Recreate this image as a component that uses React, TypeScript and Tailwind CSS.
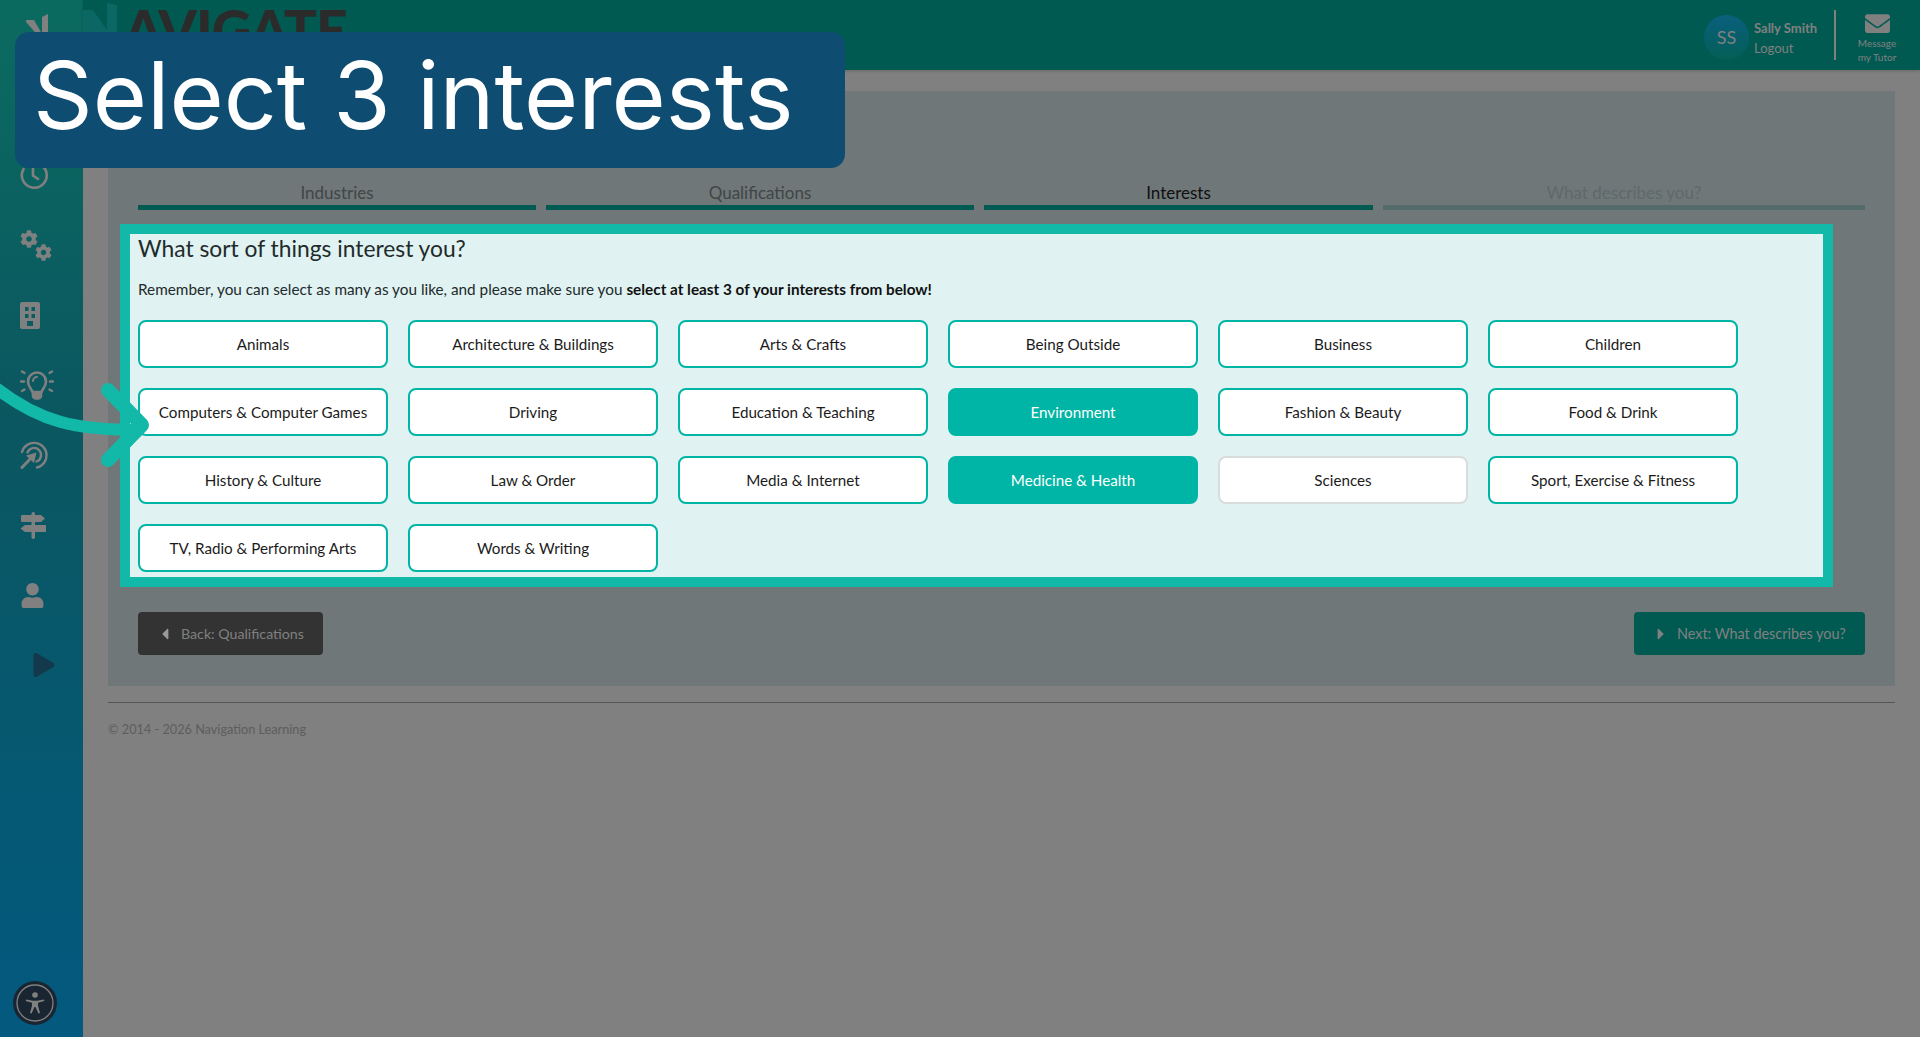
import React from "react";
import { FaCog, FaUser, FaEnvelope, FaPlay, FaCaretLeft, FaCaretRight } from "react-icons/fa";

const rows = [
  ["Animals", "Architecture & Buildings", "Arts & Crafts", "Being Outside", "Business", "Children"],
  ["Computers & Computer Games", "Driving", "Education & Teaching", "Environment", "Fashion & Beauty", "Food & Drink"],
  ["History & Culture", "Law & Order", "Media & Internet", "Medicine & Health", "Sciences", "Sport, Exercise & Fitness"],
  ["TV, Radio & Performing Arts", "Words & Writing"],
];

function Interest({ label }: { label: string }) {
  const selected = label === "Environment" || label === "Medicine & Health";
  const focused = label === "Sciences";
  return (
    <button
      className={
        "h-12 w-[250px] rounded-lg border-2 text-[15.2px] " +
        (selected
          ? "border-[#00b5a5] bg-[#00b5a5] text-white"
          : focused
          ? "border-[#d9dcdc] bg-white text-[#1b1b1b]"
          : "border-[#00b5a5] bg-white text-[#1b1b1b]")
      }
    >
      {label}
    </button>
  );
}

function Clock() {
  return (
    <svg width="28" height="28" viewBox="0 0 28 28" fill="none" stroke="#808080" strokeWidth="2.6" strokeLinecap="round">
      <path d="M8 3.6A12.4 12.4 0 1 1 3.6 8" />
      <path d="M13 7v7.5l5 3.5" />
    </svg>
  );
}
function Gears() {
  return (
    <div className="flex h-[31px] w-[32px] flex-col">
      <FaCog size={18} color="#808080" className="self-start" />
      <FaCog size={17} color="#808080" className="mt-[-4px] self-end" />
    </div>
  );
}
function Building() {
  return (
    <svg width="20" height="27" viewBox="0 0 20 27">
      <path fillRule="evenodd" fill="#808080" d="M2 0h16a2 2 0 0 1 2 2v23a2 2 0 0 1-2 2H2a2 2 0 0 1-2-2V2a2 2 0 0 1 2-2zM5 5v4h3.5V5zM11.500 5v4H15V5zM5 12v4h3.500v-4zM11.500 12v4H15v-4zM7 19v5h6v-5z" />
    </svg>
  );
}
function Bulb() {
  return (
    <svg width="34" height="34" viewBox="0 0 34 34" fill="none" stroke="#808080" strokeLinecap="round">
      <path strokeWidth="2.6" d="M12.500 24c-.5-3-4.500-5-4.500-10.500a9 9 0 0 1 18 0C26 19 22 21 21.500 24z" />
      <path fill="#808080" strokeWidth="2.6" d="M13 26h8v1.500a3 3 0 0 1-3 3h-2a3 3 0 0 1-3-3z" />
      <path strokeWidth="2" d="M13 13a4 4 0 0 1 4-4" />
      <path strokeWidth="2.400" d="M2 3.500l2.500 1.500M1 13.500h3M2 23l2.500-1.500M32 3.500L29.500 5M33 13.500h-3M32 23l-2.500-1.500" />
    </svg>
  );
}
function TargetArrow() {
  return (
    <svg width="28" height="28" viewBox="0 0 28 28" fill="none" stroke="#808080" strokeLinecap="round">
      <path strokeWidth="2.400" d="M2 11A12.500 12.500 0 1 1 17 26.500" />
      <path strokeWidth="2.400" d="M7.500 11.500A7 7 0 1 1 16.500 20.500" />
      <path strokeWidth="3" d="M2 26.500L12 16" />
      <path fill="#808080" stroke="none" d="M6 14.500L16.500 11.500L14 22z" />
    </svg>
  );
}
function Signs() {
  return (
    <svg width="26" height="27" viewBox="0 0 26 27" fill="#808080">
      <rect x="11.500" y="0" width="3.500" height="27" rx="1.700" />
      <path d="M2 3h19l4 3.500-4 3.500H2a1 1 0 0 1-1-1V4a1 1 0 0 1 1-1z" />
      <path d="M25 13H5l-4.500 3.500L5 20h20a1 1 0 0 0 1-1v-5a1 1 0 0 0-1-1z" />
    </svg>
  );
}
function Access() {
  return (
    <svg width="44" height="44" viewBox="0 0 44 44">
      <circle cx="22" cy="22" r="22" fill="#1a2532" />
      <circle cx="22" cy="22" r="18" fill="none" stroke="#808080" strokeWidth="1.300" />
      <circle cx="22" cy="14" r="2.800" fill="#808080" />
      <path fill="#808080" d="M13 18.500l7 1.200h4l7-1.200.3 1.500-6.300 1.700v3l2 7.300-1.600.5L22.500 26h-1l-2.900 6.500-1.600-.5 2-7.300v-3L12.700 20z" />
    </svg>
  );
}

const sideIcons = [
  <Clock />,
  <Gears />,
  <Building />,
  <Bulb />,
  <TargetArrow />,
  <Signs />,
  <FaUser size={25} color="#808080" />,
  <FaPlay size={24} color="#14394c" className="ml-[12px]" />,
];

export default function App() {
  return (
    <div className="relative flex h-[1037px] w-full overflow-hidden bg-[#808080] text-[15px] font-['Lato','Open_Sans',sans-serif]">
      <aside className="flex w-[83px] shrink-0 flex-col bg-gradient-to-b from-[#0b6b60] via-[#0b5760] via-40% to-[#03597f]">
        <div className="h-[140px] pl-[26px] pt-[14px]">
          <svg width="24" height="24" viewBox="0 0 24 24">
            <path fill="#808080" d="M0 6h8l8 14V3l6-3v24H14L0 8z" />
          </svg>
        </div>
        {sideIcons.map((icon, i) => (
          <div key={i} className="flex h-[70px] items-center pl-[20px]">
            {icon}
          </div>
        ))}
        <div className="mt-auto pb-[12px] pl-[13px]">
          <Access />
        </div>
      </aside>

      <main className="flex min-w-0 flex-1 flex-col">
        <header className="flex h-[70px] shrink-0 items-center justify-between overflow-hidden bg-[#005a52] shadow-[0_1px_3px_rgba(0,0,0,0.2)]">
          <div className="flex h-full items-start">
            <svg width="40" height="70" viewBox="0 0 40 70">
              <path fill="#0b6763" d="M0 10h10l14 20V3l10 2v60H0z" />
            </svg>
            <span className="ml-[1px] mt-[2px] text-[55px] font-black leading-none tracking-[-1px] text-[#2b2b2b]">AVIGATE</span>
          </div>
          <div className="flex h-full items-center text-[#808080]">
            <div className="mt-[5px] h-[45px] w-[45px] rounded-full bg-gradient-to-b from-[#0b5f7d] to-[#055e55] text-center text-[18px] leading-[45px]">SS</div>
            <div className="ml-[5px] w-[80px] pt-[5px] text-[13px] leading-[20px]">
              <div className="font-bold">Sally Smith</div>
              <div>Logout</div>
            </div>
            <div className="h-[50px] w-[2px] bg-[#808080]" />
            <div className="mr-[2px] flex w-[82px] flex-col items-center pt-[4px] text-[10px] leading-[14px]">
              <FaEnvelope size={25} color="#808080" />
              <div>Message</div>
              <div>my Tutor</div>
            </div>
          </div>
        </header>

        <section className="mx-[25px] mt-[21px] h-[595px] shrink-0 bg-[#6f7778] px-[30px] pt-[90px]">
          <div className="flex gap-[10px] text-center text-[17px] leading-[24px]">
            <div className="w-[398px] border-b-[5px] border-[#005a52] text-[#3f4646]">Industries</div>
            <div className="w-[428px] border-b-[5px] border-[#005a52] text-[#3f4646]">Qualifications</div>
            <div className="w-[389px] border-b-[5px] border-[#005a52] text-[#101010]">Interests</div>
            <div className="w-[482px] border-b-[5px] border-[#536b6a] text-[#5e6a6a]">What describes you?</div>
          </div>

          <div className="mx-[-18px] mt-[14px] h-[363px] w-[1713px] border-[10px] border-[#13b9a8] bg-[#e0f2f1] px-[8px]">
            <h2 className="text-[22.8px] leading-[28px] text-[#222a2c]">What sort of things interest you?</h2>
            <p className="mt-[15px] text-[15.3px] leading-[24px] text-[#222a2c]">
              Remember, you can select as many as you like, and please make sure you{" "}
              <b className="font-bold text-[#111]">select at least 3 of your interests from below!</b>
            </p>
            <div className="mt-[19px] flex flex-col gap-5">
              {rows.map((row, r) => (
                <div key={r} className="flex gap-5">
                  {row.map((label) => (
                    <Interest key={label} label={label} />
                  ))}
                </div>
              ))}
            </div>
          </div>

          <div className="mt-[25px] flex justify-between">
            <button className="flex h-[43px] w-[185px] items-center rounded bg-[#333333] pl-[18px] text-[14.2px] text-[#808080]">
              <FaCaretLeft size={18} color="#9a9a9a" className="mr-[7px]" />
              Back: Qualifications
            </button>
            <button className="flex h-[43px] w-[231px] items-center rounded bg-[#005a52] pl-[18px] text-[14.4px] text-[#808080]">
              <FaCaretRight size={18} color="#808080" className="mr-[7px]" />
              Next: What describes you?
            </button>
          </div>
        </section>

        <footer className="mx-[25px] mt-[16px] border-t border-[#555555] pt-[16px] text-[12.7px] leading-[20px] text-[#5d5d5d]">
          © 2014 - 2026 Navigation Learning
        </footer>
      </main>

      <svg className="absolute left-0 top-[370px]" width="160" height="110" viewBox="0 0 160 110" fill="none" stroke="#13b9a8" strokeLinecap="round" strokeLinejoin="round">
        <path strokeWidth="12" strokeLinecap="butt" d="M-4 18C40 52 75 60 140 60" />
        <path strokeWidth="14" d="M108 20L142 55L108 90" />
      </svg>

      <div className="absolute left-[15px] top-[32px] flex h-[136px] w-[830px] items-center rounded-[14px] bg-[#0e4c72] pb-[9px] pl-[18px] font-['Inter',sans-serif] text-[93px] leading-none text-white">
        Select 3 interests
      </div>
    </div>
  );
}
